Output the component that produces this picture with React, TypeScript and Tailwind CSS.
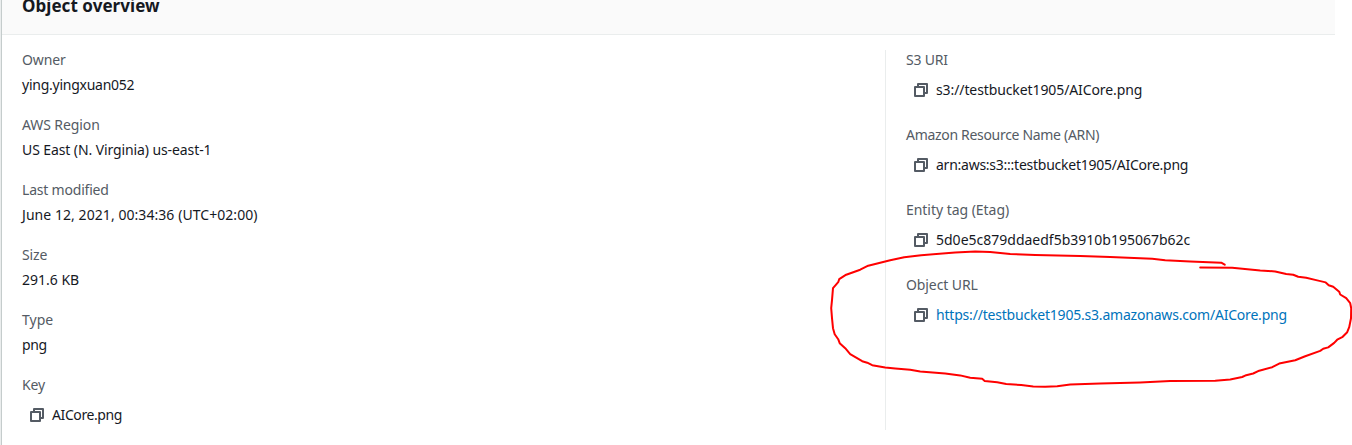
import type { ReactNode } from "react";

function CopyIcon() {
  return (
    <svg width="14" height="14" viewBox="0 0 14 14" fill="none" stroke="#545b64" strokeWidth="2" strokeLinejoin="round" className="shrink-0">
      <path d="M1 4h9v9H1z" />
      <path d="M4 4V1h9v9h-3" />
    </svg>
  );
}

function Field({ label, labelClass = "", children }: { label: string; labelClass?: string; children: ReactNode }) {
  return (
    <div>
      <div className="h-[25px] text-[#545b64]">
        <span className={labelClass}>{label}</span>
      </div>
      {children}
    </div>
  );
}

function Copyable({ children }: { children: ReactNode }) {
  return (
    <div className="flex h-[30px] items-center pl-2">
      <CopyIcon />
      <div className="pl-2">{children}</div>
    </div>
  );
}

export default function App() {
  return (
    <div className="relative flex h-[445px] w-[1352px] overflow-hidden bg-white font-['Noto_Sans',sans-serif] text-[14px] leading-5 text-[#16191f]">
      <div className="w-px bg-[#eaeded]" />
      <div className="w-px bg-[#c5cccc]" />
      <main className="w-[1333px]">
        <header className="h-[35px] border-b border-[#eaeded] bg-[#fafafa] pl-5">
          <h2 className="-translate-y-[5px] text-[17px] font-bold leading-[22px] tracking-[0.05px]">Object overview</h2>
        </header>
        <div className="flex pt-[15px]">
          <section className="flex h-[380px] w-[884px] flex-col gap-5 border-r border-[#eaeded] pl-5">
            <Field label="Owner" labelClass="tracking-[-0.1px]"><div className="h-5 tracking-[-0.25px]">ying.yingxuan052</div></Field>
            <Field label="AWS Region" labelClass="tracking-[-0.1px]"><div className="h-5 tracking-[-0.1px]">US East (N. Virginia) us-east-1</div></Field>
            <Field label="Last modified" labelClass="tracking-[-0.2px]"><div className="h-5 tracking-[0.06px]">June 12, 2021, 00:34:36 (UTC+02:00)</div></Field>
            <Field label="Size" labelClass="tracking-[-0.1px]"><div className="h-5">291.6 KB</div></Field>
            <Field label="Type"><div className="h-5 tracking-[-0.4px]">png</div></Field>
            <Field label="Key" labelClass="tracking-[-0.1px]"><Copyable><span className="tracking-[-0.4px]">AICore.png</span></Copyable></Field>
          </section>
          <section className="flex flex-col gap-5 pl-5">
            <Field label="S3 URI" labelClass="tracking-[-0.2px]"><Copyable><span className="tracking-[-0.1px]">s3://testbucket1905/AICore.png</span></Copyable></Field>
            <Field label="Amazon Resource Name (ARN)" labelClass="tracking-[-0.31px]"><Copyable><span className="tracking-[-0.25px]">arn:aws:s3:::testbucket1905/AICore.png</span></Copyable></Field>
            <Field label="Entity tag (Etag)" labelClass="tracking-[-0.04px]"><Copyable><span>5d0e5c879ddaedf5b3910b195067b62c</span></Copyable></Field>
            <Field label="Object URL" labelClass="tracking-[-0.1px]"><Copyable><a className="tracking-[-0.2px] text-[#0073bb]">https://testbucket1905.s3.amazonaws.com/AICore.png</a></Copyable></Field>
          </section>
        </div>
      </main>
      <svg className="pointer-events-none absolute inset-0" width="1352" height="445" viewBox="0 0 1352 445" fill="none" stroke="#ff0000" strokeWidth="2" strokeLinecap="round" strokeLinejoin="round">
        <path transform="translate(0.2 0.2)" d="M1224.5 264.5L1221 262.5L1190 261.2L1165 260L1152 258.6L1110 256.8L1080 255.8L1035 254.8L1010 253.8L990 251.8L975 251.4L955 252.2L921 255L904 257L890 260L868 265.5L860 269.5L846 274.5L839 279L838 282L832.8 288L831.8 300L831 308L831.8 318L832.8 328L834.5 334L838 339L839.5 343L845 348L850 354L862 361L867 362.5L872 365L885 367.2L895 368.2L910 369.5L920 371.2L945 373.4L960 375.2L970 377.6L982 378.6L984.5 380.7L997 382L1006 383.8L1021 384.8L1033 386.4L1045 386.6L1057 386L1070 384.4L1100 383.3L1140 382.2L1170 380.8L1215 380.6L1230 379.2L1242 376.8L1246 375L1253 373.3L1259 370.5L1272 367L1279 363.4L1295 360L1305 356L1320 350.7L1323 348.6L1328 347.2L1334 342.7L1337 339.5L1342 337L1347 332L1349 327L1350.8 318L1351 308L1350 303L1346 298L1340 294.3L1339 291.5L1333 286.5L1328.5 285L1325.5 282.2L1317 280.2L1306 277.6L1298 276.6L1293 274.6L1286 273.7L1275 271.2L1260 270.2L1232 267.5L1200 267.4" />
      </svg>
    </div>
  );
}
